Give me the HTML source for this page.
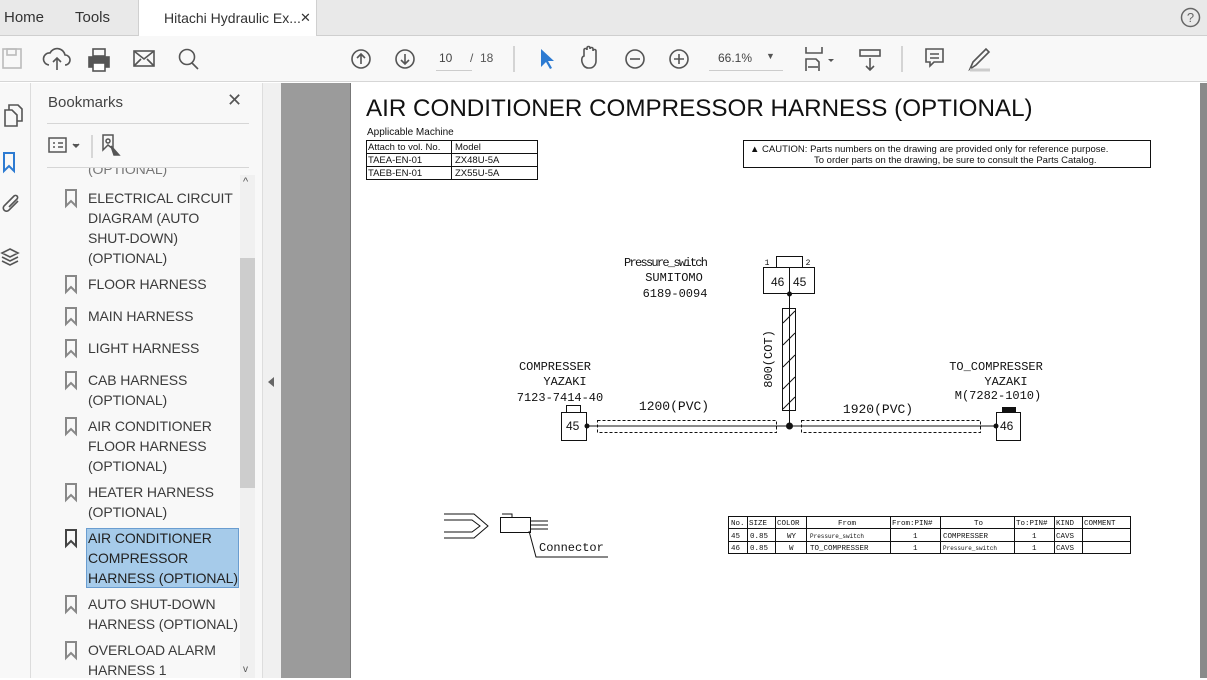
<!DOCTYPE html>
<html><head><meta charset="utf-8"><style>
*{margin:0;padding:0;box-sizing:border-box}
body{width:1207px;height:678px;overflow:hidden;font-family:"Liberation Sans",sans-serif;background:#fff;position:relative;color:#333}
.abs{position:absolute}
.tabbar{left:0;top:0;width:1207px;height:36px;background:#e9e9e9;border-bottom:1px solid #cfcfcf}
.tab{top:0;height:36px;font-size:15px;line-height:36px;color:#333}
.toolbar{left:0;top:36px;width:1207px;height:46px;background:#f8f8f8;border-bottom:1px solid #d6d6d6}
.rail{left:0;top:83px;width:31px;height:595px;background:#f8f8f8;border-right:1px solid #dcdcdc}
.panel{left:31px;top:83px;width:231px;height:595px;background:#f8f8f8}
.split{left:262px;top:83px;width:19px;height:595px;background:#f0f0f0;border-left:1px solid #ddd}
.gray{left:281px;top:83px;width:69px;height:595px;background:#9b9b9b}
.page{left:350px;top:83px;width:850px;height:595px;background:#fff;border-left:1px solid #777}
.sb{left:1200px;top:83px;width:7px;height:595px;background:#8a8a8a}
.bm{left:88px;font-size:14px;line-height:20px;color:#3b3b3b;white-space:nowrap;letter-spacing:-0.1px}
</style></head><body>
<div class="abs tabbar"></div>
<div class="abs tab" style="left:4px">Home</div>
<div class="abs tab" style="left:75px">Tools</div>
<div class="abs" style="left:138px;top:0;width:179px;height:37px;background:#fff;border-left:1px solid #d0d0d0;border-right:1px solid #d0d0d0"></div>
<div class="abs tab" style="left:164px;font-size:14px">Hitachi Hydraulic Ex...</div>
<div class="abs tab" style="left:300px;font-size:13px">✕</div>
<svg class="abs" style="left:1180px;top:7px" width="21" height="21"><circle cx="10.5" cy="10.5" r="9" fill="none" stroke="#666" stroke-width="1.5"/><text x="10.5" y="15" font-size="13" text-anchor="middle" fill="#666" font-family="Liberation Sans">?</text></svg>

<div class="abs toolbar"></div>
<svg class="abs" style="left:0;top:36px" width="1207" height="46" fill="none" stroke="#555" stroke-width="1.6">
<rect x="3" y="13" width="18" height="19" stroke="#bbb"/><rect x="7" y="13" width="9" height="6" stroke="#bbb"/>
<path d="M49 29a6 6 0 0 1 1-12 8 8 0 0 1 15 2 5 5 0 0 1 0 10M57 34V22m-4 4 4-4 4 4"/>
<rect x="89" y="21" width="20" height="10" fill="#555"/><rect x="93" y="13" width="12" height="7"/><rect x="93" y="27" width="12" height="8" fill="#fff"/>
<rect x="134" y="15" width="20" height="15"/><path d="M134 15l10 8 10-8M134 30l7-7m13 7-7-7"/>
<circle cx="187" cy="21" r="7.5"/><path d="M192 27l6 6"/>
<circle cx="361" cy="23" r="9"/><path d="M361 28v-10m-4 4 4-4 4 4"/>
<circle cx="405" cy="23" r="9"/><path d="M405 18v10m-4-4 4 4 4-4"/>
<path d="M514 10v26" stroke="#ccc"/>
<path d="M541 13l0 18 5-5 4 7 2-1-4-7h6z" fill="#2d7bd2" stroke="none"/>
<path d="M584 30c-3-4-3-9 0-10v-6c0-2 3-2 3 0v-2c0-2 3-2 3 0v1c0-2 3-2 3 0v2c0-2 3-2 3 0v10c0 4-3 7-6 7h-2c-2 0-3-1-4-2z"/>
<circle cx="635" cy="23" r="9"/><path d="M630 23h10"/>
<circle cx="679" cy="23" r="9"/><path d="M674 23h10m-5-5v10"/>
<path d="M806 11v6h16v-6M806 35V23h10l3 3v9" /><path d="M808 31h10"/>
<path d="M828 23l3 3 3-3" fill="#555" stroke="none"/>
<rect x="860" y="14" width="20" height="6"/><path d="M870 22v12m-4-4 4 4 4-4"/>
<path d="M902 10v26" stroke="#ccc"/>
<path d="M926 13h17v13h-9l-4 4v-4h-4z"/><path d="M930 18h9m-9 4h9"/>
<path d="M970 33l3-7 13-13 3 3-13 13z"/><path d="M970 34h20" stroke="#ccc" stroke-width="3"/>
</svg>
<div class="abs" style="left:439px;top:51px;font-size:12px;color:#444">10</div>
<div class="abs" style="left:436px;top:70px;width:36px;height:1px;background:#ccc"></div>
<div class="abs" style="left:470px;top:51px;font-size:12px;color:#555">/&nbsp;&nbsp;18</div>
<div class="abs" style="left:718px;top:51px;font-size:12px;color:#444">66.1%</div>
<div class="abs" style="left:766px;top:51px;font-size:9px;color:#555">▼</div>
<div class="abs" style="left:709px;top:70px;width:74px;height:1px;background:#ccc"></div>

<div class="abs rail"></div>
<svg class="abs" style="left:0;top:83px" width="31" height="200" fill="none" stroke="#555" stroke-width="1.6">
<path d="M5 27V43h12V32l-5-5zM9 27v-5h9l4 4v12h-5"/>
<path d="M4 70V88l5-5 5 5V70z" stroke="#2d7bd2" stroke-width="2"/>
<path d="M18 118l-9 9a3 3 0 0 1-5-4l10-10a2 2 0 0 1 3 3l-8 8"/>
<path d="M10 166l8 4-8 4-8-4zM2 174l8 4 8-4M2 178l8 4 8-4"/>
</svg>
<div class="abs panel"></div>
<div class="abs" style="left:48px;top:94px;font-size:15px;color:#444">Bookmarks</div>
<div class="abs" style="left:227px;top:90px;font-size:18px;color:#555">✕</div>
<div class="abs" style="left:47px;top:123px;width:202px;height:1px;background:#d6d6d6"></div>
<svg class="abs" style="left:45px;top:130px" width="80" height="30" fill="none" stroke="#555" stroke-width="1.5"><rect x="4" y="8" width="17" height="14"/><path d="M8 13h2m3 0h5M8 17h2m3 0h5"/><path d="M28 14l3 3 3-3" fill="#555"/><path d="M47 5v23" stroke="#ccc"/><path d="M58 5h10v14l-5-4-5 5z"/><circle cx="63" cy="11" r="2"/><path d="M66 16l8 9h-5z" fill="#555"/></svg>
<div class="abs" style="left:240px;top:175px;width:15px;height:503px;background:#f0f0f0"></div>
<div class="abs" style="left:240px;top:258px;width:15px;height:230px;background:#cdcdcd"></div>
<div class="abs" style="left:243px;top:176px;font-size:11px;color:#555">^</div>
<div class="abs" style="left:243px;top:664px;font-size:10px;color:#555">v</div>
<div class="abs" style="left:86px;top:528px;width:153px;height:60px;background:#a6cbea;border:1px solid #6a9dd0"></div>
<div class="abs bm" style="top:168px;height:12px;overflow:hidden;color:#777"><span style="position:relative;top:-9px">(OPTIONAL)</span></div>
<div class="abs" style="left:47px;top:167px;width:202px;height:1px;background:#d6d6d6"></div>
<div class="abs bm" style="top:188px">ELECTRICAL CIRCUIT<br>DIAGRAM (AUTO<br>SHUT-DOWN)<br>(OPTIONAL)</div>
<div class="abs bm" style="top:274px">FLOOR HARNESS</div>
<div class="abs bm" style="top:306px">MAIN HARNESS</div>
<div class="abs bm" style="top:338px">LIGHT HARNESS</div>
<div class="abs bm" style="top:370px">CAB HARNESS<br>(OPTIONAL)</div>
<div class="abs bm" style="top:416px">AIR CONDITIONER<br>FLOOR HARNESS<br>(OPTIONAL)</div>
<div class="abs bm" style="top:482px">HEATER HARNESS<br>(OPTIONAL)</div>
<div class="abs bm" style="top:528px;color:#222">AIR CONDITIONER<br>COMPRESSOR<br>HARNESS (OPTIONAL)</div>
<div class="abs bm" style="top:594px">AUTO SHUT-DOWN<br>HARNESS (OPTIONAL)</div>
<div class="abs bm" style="top:640px">OVERLOAD ALARM<br>HARNESS 1</div>
<svg class="abs" style="left:63px;top:0" width="16" height="678" fill="none" stroke="#888" stroke-width="2">
<path d="M3 190v16l5-5 5 5v-16z"/><path d="M3 276v16l5-5 5 5v-16z"/><path d="M3 308v16l5-5 5 5v-16z"/><path d="M3 340v16l5-5 5 5v-16z"/><path d="M3 372v16l5-5 5 5v-16z"/><path d="M3 418v16l5-5 5 5v-16z"/><path d="M3 484v16l5-5 5 5v-16z"/><path d="M3 530v16l5-5 5 5v-16z" stroke="#444"/><path d="M3 596v16l5-5 5 5v-16z"/><path d="M3 642v16l5-5 5 5v-16z"/>
</svg>

<div class="abs split"></div>
<div class="abs" style="left:268px;top:377px;width:0;height:0;border-top:5px solid transparent;border-bottom:5px solid transparent;border-right:6px solid #666"></div>
<div class="abs gray"></div>
<div class="abs page"></div>
<div class="abs sb"></div>

<div class="abs" style="left:366px;top:95px;font-size:24.2px;color:#111;white-space:nowrap">AIR CONDITIONER COMPRESSOR HARNESS (OPTIONAL)</div>
<div class="abs" style="left:367px;top:127px;font-size:10px;color:#111">Applicable Machine</div>
<svg class="abs" style="left:350px;top:83px" width="850" height="595" font-family="Liberation Sans" fill="#111">
<g fill="none" stroke="#111" stroke-width="1">
<rect x="16.5" y="57.5" width="171" height="39"/><path d="M16 70.5h171M16 83.5h171M101.5 57v39"/>
<rect x="393.5" y="57.5" width="407" height="27"/>
</g>
<g font-size="9.5"><text x="18" y="67">Attach to vol. No.</text><text x="105" y="67">Model</text><text x="18" y="80">TAEA-EN-01</text><text x="105" y="80">ZX48U-5A</text><text x="18" y="93">TAEB-EN-01</text><text x="105" y="93">ZX55U-5A</text>
<text x="400" y="69">▲ CAUTION: Parts numbers on the drawing are provided only for reference purpose.</text><text x="464" y="80">To order parts on the drawing, be sure to consult the Parts Catalog.</text></g>
<g font-family="Liberation Mono" font-size="12" text-anchor="middle">
<text x="316" y="183" textLength="84">Pressure_switch</text><text x="324" y="198">SUMITOMO</text><text x="325" y="214">6189-0094</text>
<text x="205" y="287">COMPRESSER</text><text x="215" y="302">YAZAKI</text><text x="210" y="318">7123-7414-40</text>
<text x="646" y="287">TO_COMPRESSER</text><text x="656" y="302">YAZAKI</text><text x="648" y="316">M(7282-1010)</text>
<text x="324" y="327" font-size="13">1200(PVC)</text><text x="528" y="330" font-size="13">1920(PVC)</text>
<text x="417" y="182" font-size="8">1</text><text x="458" y="182" font-size="8">2</text>
<text transform="translate(422 276) rotate(-90)" font-size="12">800(COT)</text>
</g>
<g fill="none" stroke="#111" stroke-width="1">
<rect x="426.5" y="173.5" width="26" height="11"/><rect x="413.5" y="184.5" width="51" height="26"/><path d="M439.5 184v26"/>
<rect x="432.5" y="225.5" width="13" height="102"/><path d="M439.5 210v133M433 240l12-12M433 262l12-12M433 284l12-12M433 306l12-12M433 326l12-12"/>
<rect x="211.5" y="329.5" width="25" height="28"/><rect x="216.5" y="322.5" width="14" height="7"/>
<rect x="646.5" y="329.5" width="24" height="28"/>
<path d="M237 343h409"/>
<rect x="247.5" y="337.5" width="179" height="12" stroke-dasharray="3 2"/><rect x="451.5" y="337.5" width="179" height="12" stroke-dasharray="3 2"/>
</g>
<rect x="652" y="324" width="14" height="6"/>
<circle cx="439.5" cy="211" r="2.5"/><circle cx="439.5" cy="343" r="3.5"/><circle cx="237" cy="343" r="2.5"/><circle cx="646" cy="343" r="2.5"/>
<g font-size="12"><text x="216" y="347">45</text><text x="421" y="203">46</text><text x="443" y="203">45</text><text x="650" y="347">46</text></g>
<g fill="none" stroke="#111" stroke-width="1">
<path d="M94 431h30l14 12-14 12H94M94 437h28l8 6-8 6H94"/>
<rect x="150.5" y="434.5" width="30" height="15"/><path d="M152 431h10v4M180 438h18M180 442h18M180 446h18M179 448l7 26h72"/>
</g>
<text x="189" y="468" font-family="Liberation Mono" font-size="12">Connector</text>
<g fill="none" stroke="#111" stroke-width="1"><rect x="378.5" y="433.5" width="402" height="37"/><path d="M378 445.5h402M378 458.5h402M397.5 433v37M425.5 433v37M456.5 433v37M540.5 433v37M590.5 433v37M664.5 433v37M704.5 433v37M732.5 433v37"/></g>
<g font-family="Liberation Mono" font-size="7.5"><text x="381" y="442">No.</text><text x="399" y="442">SIZE</text><text x="427" y="442">COLOR</text><text x="488" y="442">From</text><text x="542" y="442">From:PIN#</text><text x="624" y="442">To</text><text x="666" y="442">To:PIN#</text><text x="706" y="442">KIND</text><text x="734" y="442">COMMENT</text>
<text x="381" y="455">45</text><text x="400" y="455">0.85</text><text x="437" y="455">WY</text><text x="460" y="455" font-size="6">Pressure_switch</text><text x="563" y="455">1</text><text x="593" y="455">COMPRESSER</text><text x="682" y="455">1</text><text x="706" y="455">CAVS</text>
<text x="381" y="467">46</text><text x="400" y="467">0.85</text><text x="439" y="467">W</text><text x="460" y="467">TO_COMPRESSER</text><text x="563" y="467">1</text><text x="593" y="467" font-size="6">Pressure_switch</text><text x="682" y="467">1</text><text x="706" y="467">CAVS</text></g>
</svg>
</body></html>
